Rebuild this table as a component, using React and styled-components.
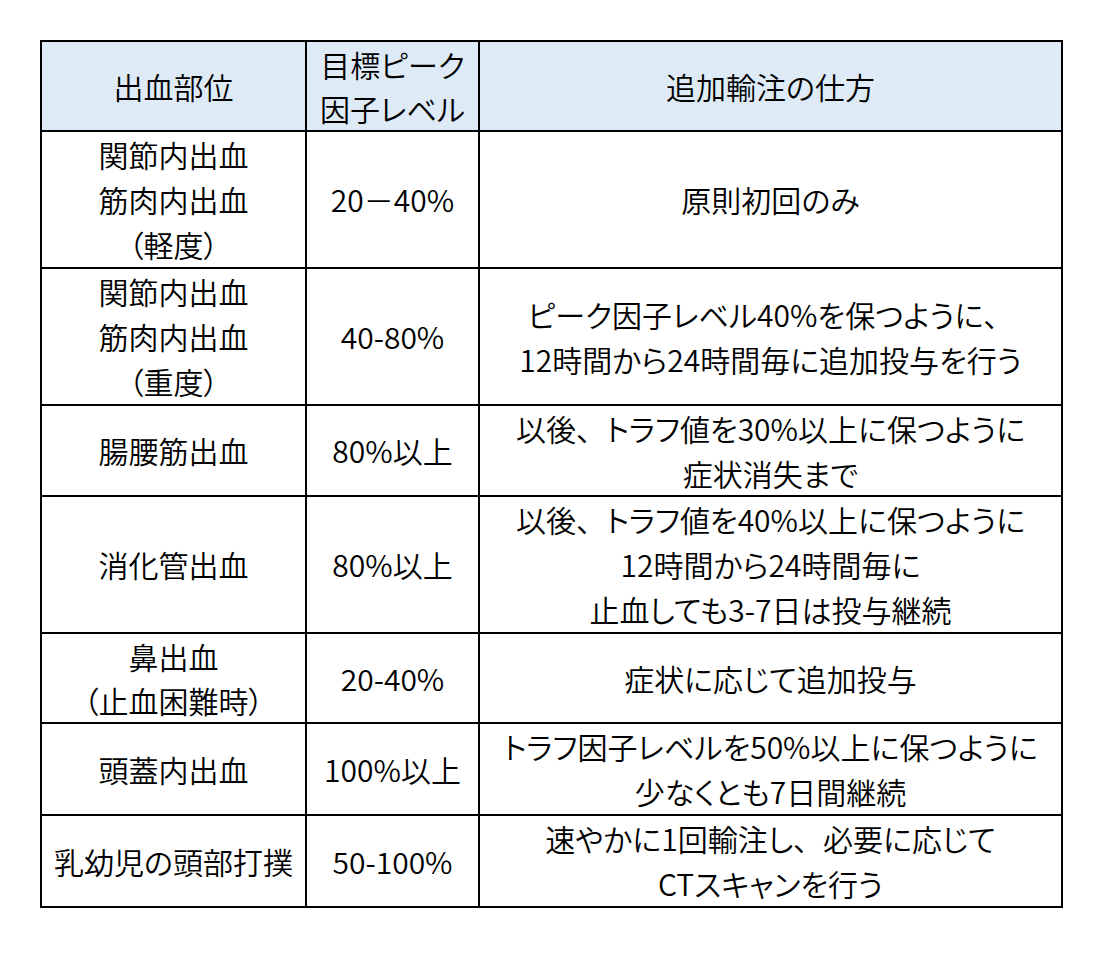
import React from 'react'
import styled, { createGlobalStyle } from 'styled-components'

const GlobalStyle = createGlobalStyle`
  html, body {
    margin: 0;
    padding: 0;
    background: #fff;
  }
  body {
    font-family: "Noto Sans CJK JP", "Noto Sans", sans-serif;
    color: #000;
  }
`

const Page = styled.div`
  padding: 40px 0 0 40px;
`

const Table = styled.table`
  border-collapse: collapse;
  width: 1021px;
  table-layout: fixed;
  font-size: 30px;
  font-weight: 350;
  line-height: 45px;
  font-feature-settings: "palt";
`

const Col = styled.col`
  width: ${({ w }) => w}px;
`

const HeadCell = styled.th`
  background: #deebf7;
  border: 2px solid #000;
  font-weight: 350;
  padding: 0;
  height: 88px;
  line-height: 44px;
  text-align: center;
  vertical-align: middle;
`

const Cell = styled.td`
  border: 2px solid #000;
  padding: 0;
  height: ${({ h }) => h || 88}px;
  line-height: ${({ lh }) => lh || 45}px;
  text-align: center;
  vertical-align: middle;
  white-space: nowrap;
`

const Line = styled.div`
  display: block;
`

// full-width comma keeps its natural width, as in the source table
const Comma = styled.span`
  font-feature-settings: normal;
`

const rows = [
  { site: ['関節内出血', '筋肉内出血', '（軽度）'], level: ['20－40%'], how: ['原則初回のみ'], h: 135 },
  { site: ['関節内出血', '筋肉内出血', '（重度）'], level: ['40-80%'], how: ['ピーク因子レベル40%を保つように、', '12時間から24時間毎に追加投与を行う'], h: 135 },
  { site: ['腸腰筋出血'], level: ['80%以上'], how: ['以後、トラフ値を30%以上に保つように', '症状消失まで'], lh: 44.5 },
  { site: ['消化管出血'], level: ['80%以上'], how: ['以後、トラフ値を40%以上に保つように', '12時間から24時間毎に', '止血しても3-7日は投与継続'], h: 135 },
  { site: ['鼻出血', '（止血困難時）'], level: ['20-40%'], how: ['症状に応じて追加投与'], lh: 44 },
  { site: ['頭蓋内出血'], level: ['100%以上'], how: ['トラフ因子レベルを50%以上に保つように', '少なくとも7日間継続'], h: 90 },
  { site: ['乳幼児の頭部打撲'], level: ['50-100%'], how: ['速やかに1回輸注し、必要に応じて', 'CTスキャンを行う'], h: 90 },
]

const Text = ({ children }) => {
  const parts = children.split('、')
  return parts.map((p, i) => (
    <React.Fragment key={i}>
      {p}
      {i < parts.length - 1 && <Comma>、</Comma>}
    </React.Fragment>
  ))
}

const Lines = ({ items }) => items.map((t, i) => <Line key={i}><Text>{t}</Text></Line>)

const App = () => (
  <Page>
    <GlobalStyle />
    <Table>
      <colgroup>
        <Col w={265} />
        <Col w={173} />
        <Col w={583} />
      </colgroup>
      <thead>
        <tr>
          <HeadCell>出血部位</HeadCell>
          <HeadCell>
            <Line>目標ピーク</Line>
            <Line>因子レベル</Line>
          </HeadCell>
          <HeadCell>追加輸注の仕方</HeadCell>
        </tr>
      </thead>
      <tbody>
        {rows.map((r, i) => (
          <tr key={i}>
            <Cell h={r.h} lh={r.lh}><Lines items={r.site} /></Cell>
            <Cell h={r.h} lh={r.lh}><Lines items={r.level} /></Cell>
            <Cell h={r.h} lh={r.lh}><Lines items={r.how} /></Cell>
          </tr>
        ))}
      </tbody>
    </Table>
  </Page>
)

export default App
